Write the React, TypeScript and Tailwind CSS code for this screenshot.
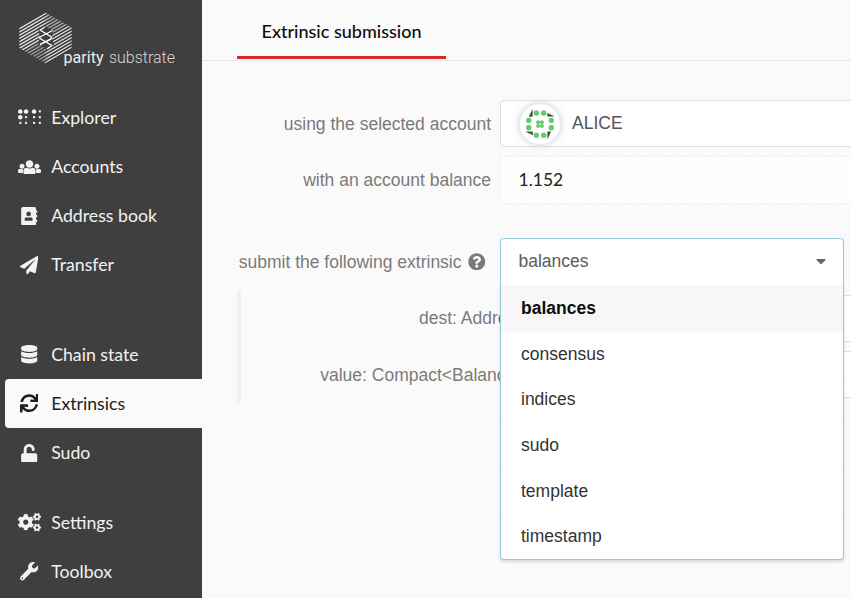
import React from 'react';
import type { IconType } from 'react-icons';
import {
  FaAddressBook,
  FaBraille,
  FaCaretDown,
  FaCogs,
  FaDatabase,
  FaPaperPlane,
  FaQuestionCircle,
  FaSync,
  FaUnlock,
  FaWrench,
} from 'react-icons/fa';

type NavEntry = {
  label: string;
  icon: IconType | React.FC<{ className?: string }>;
  active?: boolean;
  wide?: boolean;
};

function UsersIcon({ className }: { className?: string }) {
  return (
    <svg className={className} viewBox="0 0 640 512" fill="currentColor">
      <path d="M320 64c57.99 0 105 47.01 105 105s-47.01 105-105 105-105-47.01-105-105S262.01 64 320 64zm113.463 217.366l-39.982-9.996c-49.168 35.365-108.766 27.473-146.961 0l-39.982 9.996C174.485 289.379 152 318.177 152 351.216V412c0 19.882 16.118 36 36 36h264c19.882 0 36-16.118 36-36v-60.784c0-33.039-22.485-61.837-54.537-69.85zM528 300c38.66 0 70-31.34 70-70s-31.34-70-70-70-70 31.34-70 70 31.34 70 70 70zm-416 0c38.66 0 70-31.34 70-70s-31.34-70-70-70-70 31.34-70 70 31.34 70 70 70zm24 112v-60.784c0-16.551 4.593-32.204 12.703-45.599-29.988 14.72-63.336 8.708-85.69-7.37l-26.655 6.664C14.99 310.252 0 329.452 0 351.477V392c0 13.255 10.745 24 24 24h112.169a52.417 52.417 0 0 1-.169-4zm467.642-107.09l-26.655-6.664c-27.925 20.086-60.89 19.233-85.786 7.218C499.369 318.893 504 334.601 504 351.216V412c0 1.347-.068 2.678-.169 4H616c13.255 0 24-10.745 24-24v-40.523c0-22.025-14.99-41.225-36.358-46.567z" />
    </svg>
  );
}

const explore: NavEntry[] = [
  { label: 'Explorer', icon: FaBraille, wide: true },
  { label: 'Accounts', icon: UsersIcon, wide: true },
  { label: 'Address book', icon: FaAddressBook },
  { label: 'Transfer', icon: FaPaperPlane },
];
const chain: NavEntry[] = [
  { label: 'Chain state', icon: FaDatabase },
  { label: 'Extrinsics', icon: FaSync, active: true },
  { label: 'Sudo', icon: FaUnlock },
];
const tools: NavEntry[] = [
  { label: 'Settings', icon: FaCogs, wide: true },
  { label: 'Toolbox', icon: FaWrench },
];
const modules = ['balances', 'consensus', 'indices', 'sudo', 'template', 'timestamp'];

function Logo() {
  const offsets = Array.from({ length: 16 }, (_, i) => 13.6 + i * 3.26);
  return (
    <svg className="block h-[88px] w-[202px]" viewBox="0 0 202 88">
      <defs>
        <clipPath id="hex">
          <polygon points="45.5,12.5 71.7,27.5 71.7,48 45.5,63.5 19.3,48 19.3,27.5" />
        </clipPath>
        <linearGradient id="fade" gradientUnits="userSpaceOnUse" x1="19" y1="0" x2="72" y2="0">
          <stop offset="0" stopColor="#f4f4f4" />
          <stop offset="0.45" stopColor="#f0f0f0" />
          <stop offset="0.6" stopColor="#b0b0b0" />
          <stop offset="1" stopColor="#c0c0c0" />
        </linearGradient>
        <linearGradient id="fadeLow" gradientUnits="userSpaceOnUse" x1="19" y1="0" x2="72" y2="0">
          <stop offset="0" stopColor="#b8b8b8" />
          <stop offset="0.45" stopColor="#a0a0a0" />
          <stop offset="0.55" stopColor="#f0f0f0" />
          <stop offset="1" stopColor="#f6f6f6" />
        </linearGradient>
      </defs>
      <g clipPath="url(#hex)" strokeWidth="1.15">
        {offsets.map((c, i) => (
          <line key={i} x1="19" y1={c + 15.3} x2="72" y2={c - 15.3} stroke={i < 8 ? 'url(#fade)' : 'url(#fadeLow)'} />
        ))}
      </g>
      <path d="M38 28 L45 26 L53 30.5 L52 38 L54 45 L47 50 L38 43 L40 37 Z" fill="#3f3f3f" />
      <g fill="none" stroke="#fff" strokeWidth="1.4" strokeLinejoin="round">
        <path d="M45 27 L40 30 L51.5 37 L51 39 L40 44.5" />
        <path d="M52.5 30.5 L40 37 L40 38.5 L52 45.5 L47 49" />
      </g>
      <g fontFamily="Roboto, sans-serif" fontSize="16" fill="#ececec">
        <text x="63.6" y="63" textLength="40" lengthAdjust="spacingAndGlyphs">parity</text>
        <text x="109" y="63" fontWeight="300" fill="#d8d8d8" textLength="66" lengthAdjust="spacingAndGlyphs">substrate</text>
      </g>
    </svg>
  );
}

function NavItem({ label, icon: Icon, active, wide }: NavEntry) {
  return (
    <a
      className={`ml-[5px] flex h-[49.2px] items-center rounded-l ${
        active ? 'bg-[#fafafa] text-[#1e1e1e]' : 'text-[#f2f2f2]'
      }`}
    >
      <span className="ml-[12.5px] flex w-[23px] justify-center">
        <Icon className={wide ? 'h-[18.4px] w-[23px] shrink-0' : 'h-[18.4px] w-[18.4px] shrink-0'} />
      </span>
      <span className="ml-[10.7px] pt-[1.2px]">{label}</span>
    </a>
  );
}

function Sidebar() {
  return (
    <aside className="h-full w-[202px] shrink-0 overflow-hidden bg-[#3f3f3f] font-[Lato,sans-serif] text-[17.7px]">
      <Logo />
      <nav className="flex flex-col pt-[5px]">
        {explore.map((e) => <NavItem key={e.label} {...e} />)}
        <div className="h-[40px]" />
        {chain.map((e) => <NavItem key={e.label} {...e} />)}
        <div className="h-[20.5px]" />
        {tools.map((e) => <NavItem key={e.label} {...e} />)}
      </nav>
    </aside>
  );
}

function Identicon() {
  const dots = [[16.3, 9], [23.7, 9], [8.8, 16.4], [31.3, 16.4], [8.8, 23.8], [31.3, 23.8], [16.3, 31.3], [23.7, 31.3]];
  const core = [[18.1, 18.2], [21.9, 18.2], [18.1, 22], [21.9, 22]];
  return (
    <svg className="h-10 w-10 rounded-full bg-white shadow-[0_0_6px_2px_#dcdcdc]" viewBox="0 0 40 40">
      <g fill="#4a4a4a">
        <path d="M12.6 5 V12.8 H8.8 Z" />
        <path d="M27.3 8.9 L34.8 12.6 H27.3 Z" />
        <path d="M5.2 27.6 H12.8 V31.3 Z" />
        <path d="M27.4 27.6 H31.2 L27.4 35.2 Z" />
      </g>
      <g fill="#62cc66">
        {dots.map(([x, y], i) => <circle key={i} cx={x} cy={y} r="2.7" />)}
        {core.map(([x, y], i) => <circle key={i} cx={x} cy={y} r="2" />)}
      </g>
    </svg>
  );
}

function ModuleSelect() {
  return (
    <div className="relative z-10 h-[47px] w-[344px] shrink-0">
      <div className="flex h-full items-center justify-between rounded-t border border-b-0 border-[#96c8da] bg-white pl-[17.5px] pr-[17px] text-[#5a5a5a]">
        <span className="-mt-px">balances</span>
        <FaCaretDown className="-mt-[2px] h-[16px] w-[10px] text-[#666]" />
      </div>
      <ul className="absolute left-0 top-full w-full rounded-b border border-t-0 border-[#96c8da] bg-white shadow-[0_2px_3px_0_rgba(34,36,38,0.15)]">
        {modules.map((m, i) => (
          <li
            key={m}
            className={`flex h-[45.7px] items-center border-t border-[#fafafa] pb-[0.6px] pl-[20px] ${
              i === 0 ? 'bg-[#f7f7f7] font-bold text-[#0d0d0d]' : 'text-[#333]'
            }`}
          >
            {m}
          </li>
        ))}
      </ul>
    </div>
  );
}

function Label({ children, className = 'pr-[9px] pt-px' }: { children: React.ReactNode; className?: string }) {
  return (
    <div className={`flex w-[298px] shrink-0 items-center justify-end whitespace-nowrap text-[#7a7a7a] ${className}`}>
      {children}
    </div>
  );
}

export default function App() {
  return (
    <div className="flex h-[598px] w-[851px] overflow-hidden bg-[#fafafa]">
      <Sidebar />
      <main className="min-w-0 flex-1 overflow-hidden">
        <header className="flex h-[61px] border-b border-[#e6e6e6] pl-[35px]">
          <div className="flex h-[59px] w-[209px] items-center justify-center border-b-3 border-[#db2828] pt-[7px] font-[Lato,sans-serif] text-[18px] font-medium text-[#0d0d0d]">
            Extrinsic submission
          </div>
        </header>
        <form className="w-[720px] pt-[39px] font-['Liberation_Sans',Arial,sans-serif] text-[17.5px]">
          <div className="flex h-[47px]">
            <Label>using the selected account</Label>
            <div className="flex flex-1 items-center rounded border border-[#dededf] bg-white pl-[19px] text-[#555]">
              <Identicon />
              <span className="-mt-px ml-[12px]">ALICE</span>
            </div>
          </div>
          <div className="mt-[9px] flex h-[48px]">
            <Label>with an account balance</Label>
            <div className="flex flex-1 items-center rounded border border-dashed border-[#eaeaea] bg-[#fdfdfd] pl-[17.5px] pt-px font-[Lato,sans-serif] text-[#222]">
              1.152
            </div>
          </div>
          <div className="mt-[34px] flex h-[47px]">
            <Label>
              submit the following extrinsic
              <FaQuestionCircle className="-mt-px ml-[6px] mr-[6px] h-[17.5px] w-[17.5px]" />
            </Label>
            <ModuleSelect />
          </div>
          <div className="ml-[35px] mt-[5px] flex h-[113px] flex-col gap-[9px] border-l-4 border-[#f1f1f1] pt-[5px]">
            <div className="flex h-[47px]">
              <Label className="pb-px pr-[14px]">dest: Address</Label>
              <div className="flex-1 rounded border border-[#dededf] bg-white" />
            </div>
            <div className="flex h-[47px]">
              <Label className="pr-[13.5px] pt-px">value: Compact&lt;Balance&gt;</Label>
              <div className="flex-1 rounded border border-[#dededf] bg-white" />
            </div>
          </div>
        </form>
      </main>
    </div>
  );
}
